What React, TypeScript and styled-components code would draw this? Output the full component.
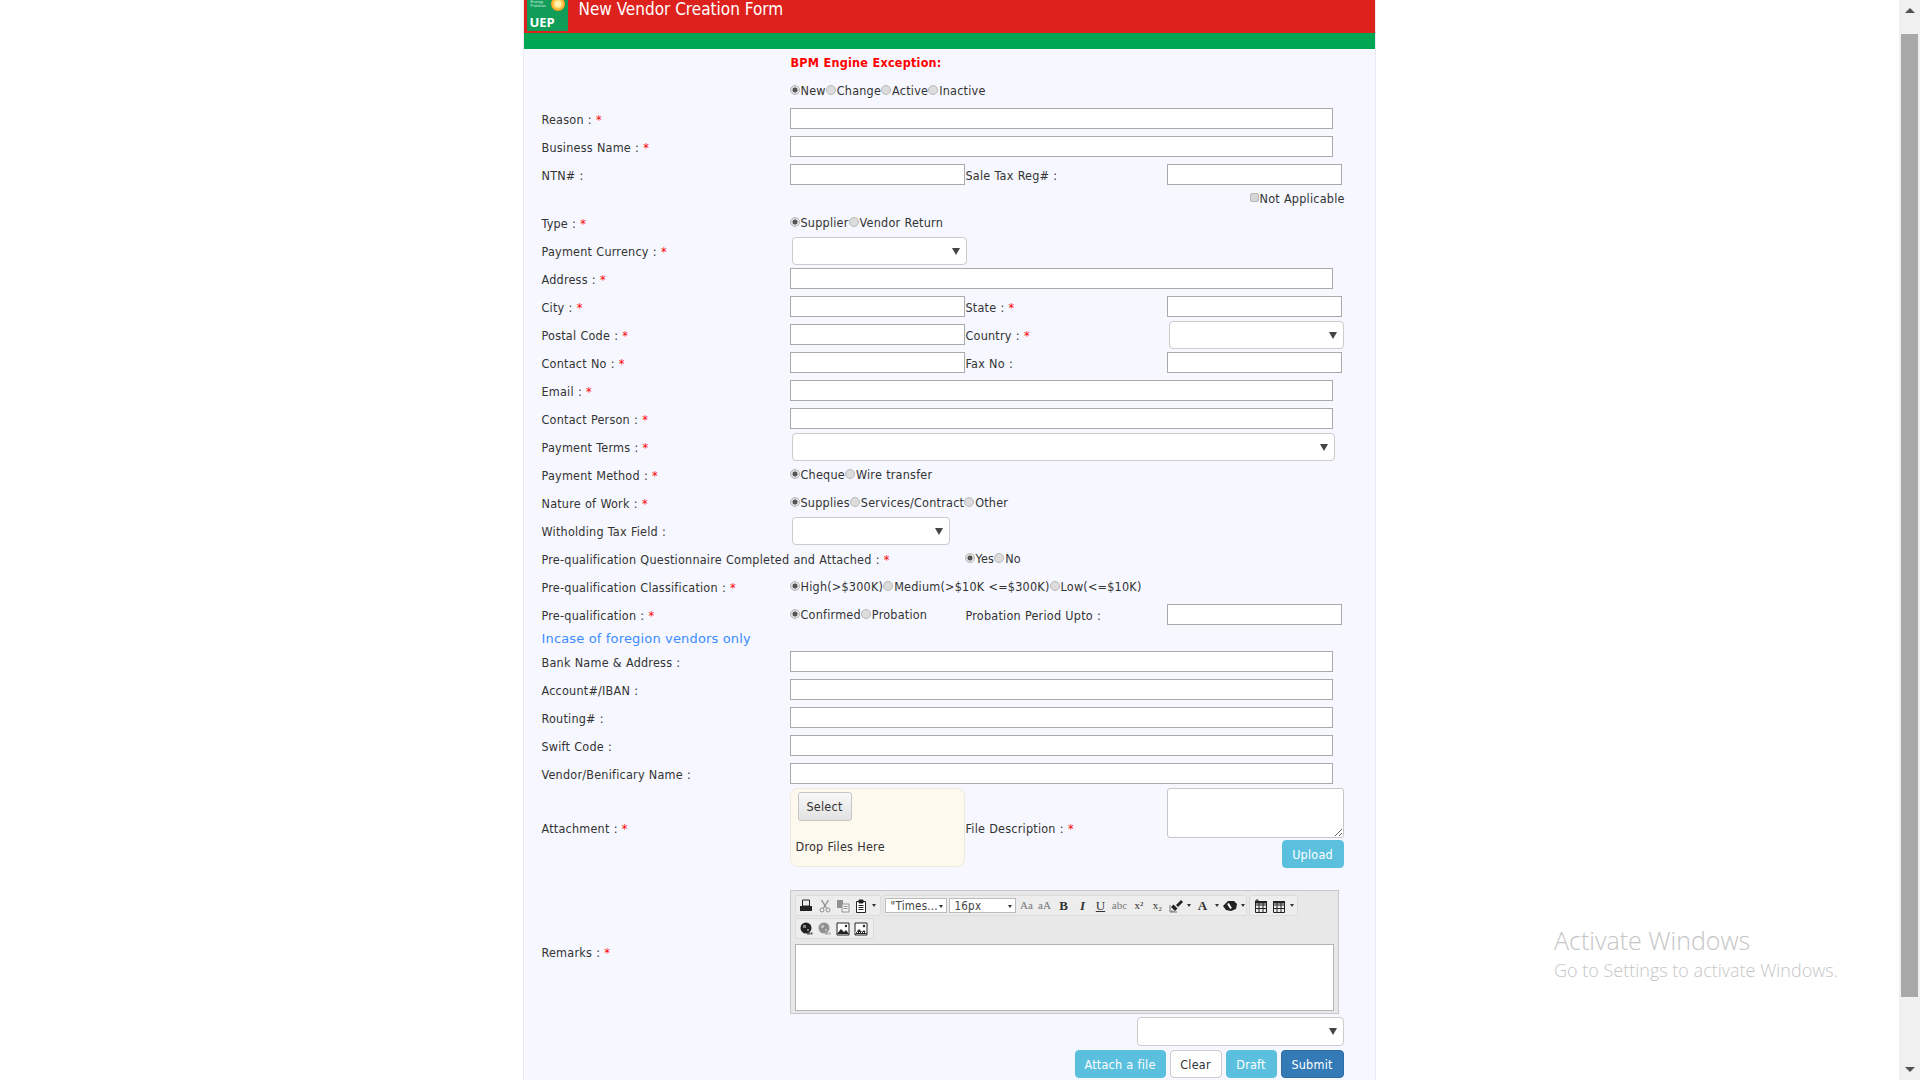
import React from "react";
import styled, { createGlobalStyle } from "styled-components";

const Global = createGlobalStyle`
  html, body { margin: 0; padding: 0; height: 100%; overflow: hidden; background: #fff; }
  #root { height: 100%; }
`;

const Shell = styled.div`
  position: relative;
  display: flex;
  height: 1080px;
  overflow: hidden;
  font-family: "DejaVu Sans", Verdana, sans-serif;
  font-stretch: condensed;
  font-size: 12.5px;
  letter-spacing: 0.22px;
  word-spacing: 0.3px;
  color: #333;
`;
const PageArea = styled.div`
  flex: 1;
  display: flex;
  justify-content: center;
`;
const Card = styled.div`
  width: 851px;
  height: 1080px;
  box-sizing: content-box;
  border-left: 1px solid #e9e9f0;
  border-right: 1px solid #e9e9f0;
  margin-left: -1px;
  background: #f6f7ff;
  overflow: hidden;
`;
const RedBar = styled.div`
  height: 33px;
  background: #dd211c;
  display: flex;
  overflow: hidden;
  padding-left: 3px;
`;
const LogoBox = styled.div`
  width: 41px;
  height: 31px;
  flex: none;
  background: #0f9d58;
  position: relative;
  overflow: hidden;
  color: #fff;
`;
const LogoSmall = styled.span`
  position: absolute;
  left: 4px;
  top: 0;
  font: 4px/4px "Liberation Sans", sans-serif;
  letter-spacing: 0;
  color: #d8f0e0;
`;
const LogoSun = styled.span`
  position: absolute;
  left: 24px;
  top: -3px;
  width: 14px;
  height: 14px;
  border-radius: 50%;
  background: radial-gradient(circle, #fff3b0 0 25%, #fdb92c 55%, #e2502a 100%);
`;
const LogoName = styled.span`
  position: absolute;
  left: 3px;
  top: 15px;
  font: bold 13px/14px "Open Sans", sans-serif;
  letter-spacing: 0;
`;
const Title = styled.div`
  margin: 1px 0 0 11px;
  color: #fff;
  font-size: 17px;
  letter-spacing: 0;
  word-spacing: 0;
  line-height: 17px;
`;
const GreenBar = styled.div`
  height: 16px;
  background: #00a651;
`;
const Form = styled.div`
  padding-left: 18px;
`;
const LabelText = styled.div<{ $span?: number }>`
  ${(p) => (p.$span ? `grid-column: span ${p.$span};` : "")}
  padding-top: 1px;
`;
const Row = styled.div<{ $h?: number }>`
  display: grid;
  grid-template-columns: 248px 175px 202px 175px;
  height: ${(p) => p.$h ?? 28}px;
  line-height: ${(p) => p.$h ?? 28}px;
  white-space: nowrap;
  & > ${LabelText}:nth-child(3) {
    padding-left: 1px;
  }
`;
const ExceptionText = styled.div`
  grid-column: 2 / 5;
  padding-left: 1px;
  color: #f00;
  font-weight: bold;
`;
const Star = styled.span`
  color: #f00;
`;
const TextInput = styled.input<{ $wide?: boolean }>`
  box-sizing: border-box;
  width: ${(p) => (p.$wide ? "543px" : "175px")};
  height: 21px;
  margin: 3px 0 0;
  padding: 0;
  background: #fff;
  border: 1px solid #aaa;
  border-radius: 0;
  ${(p) => (p.$wide ? "grid-column: span 3;" : "")}
`;
const SelectBox = styled.div<{ $w: number; $span?: number }>`
  box-sizing: border-box;
  position: relative;
  width: ${(p) => p.$w}px;
  height: 28px;
  margin-left: 2px;
  background: #fff;
  border: 1px solid #ccc;
  border-radius: 4px;
  ${(p) => (p.$span ? `grid-column: span ${p.$span};` : "")}
  &::after {
    content: "";
    position: absolute;
    right: 6px;
    top: 10px;
    border-left: 4px solid transparent;
    border-right: 4px solid transparent;
    border-top: 7px solid #444;
  }
`;
const RadioGroup = styled.div<{ $span?: number }>`
  ${(p) => (p.$span ? `grid-column: span ${p.$span};` : "")}
  display: flex;
  align-items: center;
  height: 27px;
`;
const Radio = styled.input.attrs({ type: "radio", readOnly: true })`
  appearance: none;
  box-sizing: border-box;
  flex: none;
  width: 10px;
  height: 10px;
  margin: 0 1px 1px 0;
  border-radius: 50%;
  background: #dcdcdc;
  border: 1px solid #b9b9b9;
  &:checked {
    background: radial-gradient(circle, #555 0 2.2px, #dcdcdc 2.8px);
  }
`;
const CheckLine = styled.div`
  grid-column: 4;
  display: flex;
  align-items: center;
  margin-left: 83px;
  height: 19px;
  line-height: 19px;
`;
const Check = styled.input.attrs({ type: "checkbox", readOnly: true })`
  appearance: none;
  box-sizing: border-box;
  flex: none;
  width: 9px;
  height: 9px;
  margin: 0 1px 2px 0;
  background: #d6d6d6;
  border: 1px solid #b5b5b5;
  border-radius: 2px;
`;
const SectionNote = styled.div`
  grid-column: 1 / 5;
  color: #3c8dff;
  font-size: 13px;
  font-stretch: normal;
  line-height: 19px;
  letter-spacing: 0.16px;
  word-spacing: 0;
`;
const AttachRow = styled.div`
  display: grid;
  grid-template-columns: 248px 175px 202px 177px;
  align-items: center;
  height: 82px;
  white-space: nowrap;
  & > ${LabelText} {
    padding-top: 0;
    margin-bottom: 2px;
  }
  & > ${LabelText}:nth-child(3) {
    padding-left: 1px;
  }
`;
const DropZone = styled.div`
  box-sizing: border-box;
  width: 175px;
  height: 79px;
  margin-bottom: 3px;
  padding: 3px 5px 0;
  background: #fef9ee;
  border: 1px solid #efe9dc;
  border-radius: 8px;
`;
const SelectFile = styled.button`
  display: block;
  box-sizing: border-box;
  width: 54px;
  height: 29px;
  margin-left: 2px;
  padding: 0;
  font: inherit;
  letter-spacing: inherit;
  color: #333;
  background: linear-gradient(#f8f8f8, #e2e2e2);
  border: 1px solid #c6c6c6;
  border-radius: 3px;
`;
const DropText = styled.div`
  margin-top: 18px;
  line-height: 15px;
`;
const DescColumn = styled.div`
  display: flex;
  flex-direction: column;
  align-items: flex-end;
  gap: 2px;
  padding-bottom: 2px;
`;
const DescArea = styled.textarea`
  box-sizing: border-box;
  display: block;
  width: 177px;
  height: 50px;
  margin: 0;
  background: #fff;
  border: 1px solid #c6c6c6;
  border-radius: 3px;
`;
const ActionButton = styled.button<{ $kind: "info" | "primary" | "plain"; $w: number }>`
  box-sizing: border-box;
  width: ${(p) => p.$w}px;
  height: 28px;
  padding: 0;
  font: inherit;
  letter-spacing: inherit;
  word-spacing: inherit;
  border-radius: 4px;
  border: 1px solid
    ${(p) => (p.$kind === "info" ? "#5bc0de" : p.$kind === "primary" ? "#2e6da4" : "#ccc")};
  background: ${(p) => (p.$kind === "info" ? "#5bc0de" : p.$kind === "primary" ? "#337ab7" : "#fff")};
  color: ${(p) => (p.$kind === "plain" ? "#333" : "#fff")};
`;
const RemarksRow = styled.div`
  display: grid;
  grid-template-columns: 248px 549px;
  align-items: center;
  margin-top: 20px;
`;
const Editor = styled.div`
  box-sizing: border-box;
  width: 549px;
  height: 124px;
  padding: 4px 4px 2px 4px;
  background: #e8e8e8;
  border: 1px solid #c8c8c8;
  display: flex;
  flex-direction: column;
`;
const ToolRow = styled.div`
  display: flex;
  gap: 2px;
  height: 21px;
  margin-bottom: 2px;
`;
const ToolGroup = styled.div<{ $w: number; $pad?: number }>`
  box-sizing: border-box;
  width: ${(p) => p.$w}px;
  padding-left: ${(p) => p.$pad ?? 2}px;
  display: flex;
  align-items: center;
  background: #ededed;
  border: 1px solid #dcdcdc;
  border-radius: 2px;
`;
const Tool = styled.span<{ $w?: number; $dim?: boolean }>`
  flex: none;
  width: ${(p) => p.$w ?? 18}px;
  height: 19px;
  display: flex;
  align-items: center;
  justify-content: center;
  font: 11px "Liberation Serif", serif;
  letter-spacing: 0;
  color: ${(p) => (p.$dim ? "#777" : "#333")};
  line-height: 1;
`;
const ToolCaret = styled.span`
  flex: none;
  width: 8px;
  display: flex;
  justify-content: center;
  &::after {
    content: "";
    border-left: 2.5px solid transparent;
    border-right: 2.5px solid transparent;
    border-top: 3px solid #333;
  }
`;
const Combo = styled.div<{ $w: number }>`
  box-sizing: border-box;
  flex: none;
  width: ${(p) => p.$w}px;
  height: 15px;
  margin-right: 2px;
  padding: 1px 3px 0 5px;
  display: flex;
  align-items: center;
  justify-content: space-between;
  background: #fff;
  border: 1px solid #bbb;
  font-size: 11.5px;
  line-height: 13px;
  color: #444;
`;
const ComboCaret = styled.span`
  border-left: 2.5px solid transparent;
  border-right: 2.5px solid transparent;
  border-top: 3px solid #333;
`;
const EditArea = styled.div`
  box-sizing: border-box;
  width: 539px;
  height: 67px;
  margin-top: 3px;
  background: #fff;
  border: 1px solid #b4b4b4;
`;
const BelowEditor = styled.div`
  display: flex;
  justify-content: flex-end;
  width: 802px;
  margin-top: 3px;
`;
const BelowSelect = styled(SelectBox)`
  height: 29px;
  margin-left: 0;
`;
const ButtonBar = styled.div`
  display: flex;
  justify-content: flex-end;
  gap: 4px;
  width: 802px;
  margin-top: 4px;
`;
const ScrollTrack = styled.div`
  width: 21px;
  flex: none;
  background: #f0f0f0;
  display: flex;
  flex-direction: column;
  align-items: center;
`;
const ScrollArrow = styled.div<{ $up?: boolean }>`
  flex: none;
  height: 34px;
  width: 100%;
  display: flex;
  align-items: ${(p) => (p.$up ? "flex-start" : "flex-end")};
  justify-content: center;
  padding: 8px 0;
  box-sizing: border-box;
  &::after {
    content: "";
    border-left: 5px solid transparent;
    border-right: 5px solid transparent;
    ${(p) => (p.$up ? "border-bottom: 5px solid #505050;" : "border-top: 5px solid #505050;")}
  }
`;
const ScrollThumb = styled.div`
  width: 17px;
  height: 963px;
  flex: none;
  background: #a8a8a8;
`;
const ScrollRest = styled.div`
  flex: 1;
`;
const Watermark = styled.div`
  position: absolute;
  left: 1554px;
  top: 924px;
  color: #c6c6c6;
  font-family: "Open Sans", sans-serif;
  font-stretch: normal;
  font-weight: 300;
  letter-spacing: 0;
  word-spacing: 0;
`;
const WatermarkTitle = styled.div`
  font-size: 25px;
  line-height: 32px;
`;
const WatermarkSub = styled.div`
  font-size: 18px;
  line-height: 24px;
  margin-top: 2px;
`;

const Label = ({ text, req, span }: { text: string; req?: boolean; span?: number }) => (
  <LabelText $span={span}>
    {text} :{req && <> <Star>*</Star></>}
  </LabelText>
);

const Radios = ({ items, span }: { items: string[]; span?: number }) => (
  <RadioGroup $span={span}>
    {items.map((t, i) => (
      <React.Fragment key={t}>
        <Radio checked={i === 0} />
        {t}
      </React.Fragment>
    ))}
  </RadioGroup>
);

const Ico = ({ children, dim }: { children: React.ReactNode; dim?: boolean }) => (
  <svg width="14" height="14" viewBox="0 0 14 14" fill="#222" opacity={dim ? 0.45 : 1}>
    {children}
  </svg>
);

const TableIcon = ({ plus }: { plus?: boolean }) => (
  <Ico>
    <path d="M1.5 2.5h11v11h-11zM1.5 6h11M1.5 9.5h11M5 2.5v11M9 2.5v11" fill="none" stroke="#222" />
    <path d="M1 2h12v2.5H1z" />
    {plus && <path d="M3 0v4M1 2h4" stroke="#222" />}
  </Ico>
);

const ImageIcon = ({ dots }: { dots?: boolean }) => (
  <Ico>
    <path d="M1 1h12v12H1z" fill="#fff" stroke="#222" />
    <path d="M1 12l4-5 3 3 2-2 3 4z" />
    <circle cx="10" cy="4" r="1.2" />
    {dots && <path d="M1 10.5h12" stroke="#fff" strokeDasharray="1 1" />}
  </Ico>
);

const LinkIcon = ({ dim }: { dim?: boolean }) => (
  <Ico dim={dim}>
    <circle cx="6" cy="6" r="5.5" />
    <path d="M3 3h3v3H3zM7 7h2v2H7z" fill="#fff" opacity="0.45" />
    <path d="M7 11.5h3M10.5 11.5h2" stroke="#555" strokeWidth="2" fill="none" />
  </Ico>
);

const Toolbar = () => (
  <>
    <ToolRow>
      <ToolGroup $w={86} $pad={0}>
        <Tool $w={20}>
          <Ico>
            <path d="M3.5 1h7v6h-7z" fill="none" stroke="#222" />
            <path d="M1 7h12v5H1z" />
          </Ico>
        </Tool>
        <Tool>
          <Ico dim>
            <path d="M3.5 1l5 8M10.5 1l-5 8" fill="none" stroke="#222" strokeWidth="1.4" />
            <circle cx="4" cy="11" r="2" fill="none" stroke="#222" />
            <circle cx="10" cy="11" r="2" fill="none" stroke="#222" />
          </Ico>
        </Tool>
        <Tool>
          <Ico dim>
            <path d="M1 1h6v8H1z" />
            <path d="M6 5h7v8H6z" fill="#fff" stroke="#222" />
            <path d="M7.5 7.5h4M7.5 9.5h4" stroke="#222" />
          </Ico>
        </Tool>
        <Tool>
          <Ico>
            <path d="M2.5 2.5h9v11h-9z" fill="#fff" stroke="#222" />
            <path d="M5 1h4v3H5zM4.5 6.5h5M4.5 8.5h5M4.5 10.5h5" stroke="#222" />
          </Ico>
        </Tool>
        <ToolCaret />
      </ToolGroup>
      <ToolGroup $w={364} $pad={1}>
        <Combo $w={62}>
          "Times...
          <ComboCaret />
        </Combo>
        <Combo $w={67}>
          16px
          <ComboCaret />
        </Combo>
        <Tool $dim>Aa</Tool>
        <Tool $dim>aA</Tool>
        <Tool $w={20}><b style={{ fontSize: 13 }}>B</b></Tool>
        <Tool><b><i style={{ fontSize: 13 }}>I</i></b></Tool>
        <Tool style={{ textDecoration: "underline", fontSize: 13 }}>U</Tool>
        <Tool $w={20} $dim>abc</Tool>
        <Tool $w={19}>x²</Tool>
        <Tool>x₂</Tool>
        <Tool>
          <Ico>
            <path d="M7 6l5-5 2 2-5 5zM4.5 5.5l4 4-2.5 2.5-4-4z" />
            <path d="M1 6v7h7M3 13v-2M5 13v-1" fill="none" stroke="#777" />
          </Ico>
        </Tool>
        <ToolCaret />
        <Tool $w={20}><b style={{ fontSize: 13 }}>A</b></Tool>
        <ToolCaret />
        <Tool>
          <Ico>
            <path d="M5 2h6l3 3-1 5-5 2-5-1-3-4z" />
            <path d="M5 4.5l3 5" stroke="#fff" strokeWidth="2" />
          </Ico>
        </Tool>
        <ToolCaret />
      </ToolGroup>
      <ToolGroup $w={49} $pad={2}>
        <Tool><TableIcon plus /></Tool>
        <Tool><TableIcon /></Tool>
        <ToolCaret />
      </ToolGroup>
    </ToolRow>
    <ToolRow>
      <ToolGroup $w={79} $pad={2}>
        <Tool><LinkIcon /></Tool>
        <Tool><LinkIcon dim /></Tool>
        <Tool><ImageIcon /></Tool>
        <Tool><ImageIcon dots /></Tool>
      </ToolGroup>
    </ToolRow>
  </>
);

export default function App() {
  return (
    <Shell>
      <Global />
      <PageArea>
        <Card>
          <RedBar>
            <LogoBox>
              <LogoSmall>Energy<br />Pakistan</LogoSmall>
              <LogoSun />
              <LogoName>UEP</LogoName>
            </LogoBox>
            <Title>New Vendor Creation Form</Title>
          </RedBar>
          <GreenBar />
          <Form>
            <Row>
              <span />
              <ExceptionText>BPM Engine Exception:</ExceptionText>
            </Row>
            <Row>
              <span />
              <Radios items={["New", "Change", "Active", "Inactive"]} span={3} />
            </Row>
            <Row><Label text="Reason" req /><TextInput $wide /></Row>
            <Row><Label text="Business Name" req /><TextInput $wide /></Row>
            <Row>
              <Label text="NTN#" />
              <TextInput />
              <Label text="Sale Tax Reg#" />
              <TextInput />
            </Row>
            <Row $h={20}>
              <span /><span /><span />
              <CheckLine><Check />Not Applicable</CheckLine>
            </Row>
            <Row>
              <Label text="Type" req />
              <Radios items={["Supplier", "Vendor Return"]} span={3} />
            </Row>
            <Row><Label text="Payment Currency" req /><SelectBox $w={175} /></Row>
            <Row><Label text="Address" req /><TextInput $wide /></Row>
            <Row>
              <Label text="City" req />
              <TextInput />
              <Label text="State" req />
              <TextInput />
            </Row>
            <Row>
              <Label text="Postal Code" req />
              <TextInput />
              <Label text="Country" req />
              <SelectBox $w={175} />
            </Row>
            <Row>
              <Label text="Contact No" req />
              <TextInput />
              <Label text="Fax No" />
              <TextInput />
            </Row>
            <Row><Label text="Email" req /><TextInput $wide /></Row>
            <Row><Label text="Contact Person" req /><TextInput $wide /></Row>
            <Row><Label text="Payment Terms" req /><SelectBox $w={543} $span={3} /></Row>
            <Row>
              <Label text="Payment Method" req />
              <Radios items={["Cheque", "Wire transfer"]} span={3} />
            </Row>
            <Row>
              <Label text="Nature of Work" req />
              <Radios items={["Supplies", "Services/Contract", "Other"]} span={3} />
            </Row>
            <Row><Label text="Witholding Tax Field" /><SelectBox $w={158} /></Row>
            <Row>
              <Label text="Pre-qualification Questionnaire Completed and Attached" req span={2} />
              <Radios items={["Yes", "No"]} span={2} />
            </Row>
            <Row>
              <Label text="Pre-qualification Classification" req />
              <Radios items={["High(>$300K)", "Medium(>$10K <=$300K)", "Low(<=$10K)"]} span={3} />
            </Row>
            <Row>
              <Label text="Pre-qualification" req />
              <Radios items={["Confirmed", "Probation"]} />
              <Label text="Probation Period Upto" />
              <TextInput />
            </Row>
            <Row $h={19}>
              <SectionNote>Incase of foregion vendors only</SectionNote>
            </Row>
            <Row><Label text="Bank Name & Address" /><TextInput $wide /></Row>
            <Row><Label text="Account#/IBAN" /><TextInput $wide /></Row>
            <Row><Label text="Routing#" /><TextInput $wide /></Row>
            <Row><Label text="Swift Code" /><TextInput $wide /></Row>
            <Row><Label text="Vendor/Benificary Name" /><TextInput $wide /></Row>
            <AttachRow>
              <Label text="Attachment" req />
              <DropZone>
                <SelectFile>Select</SelectFile>
                <DropText>Drop Files Here</DropText>
              </DropZone>
              <Label text="File Description" req />
              <DescColumn>
                <DescArea />
                <ActionButton $kind="info" $w={62}>Upload</ActionButton>
              </DescColumn>
            </AttachRow>
            <RemarksRow>
              <Label text="Remarks" req />
              <Editor>
                <Toolbar />
                <EditArea />
              </Editor>
            </RemarksRow>
            <BelowEditor><BelowSelect $w={207} /></BelowEditor>
            <ButtonBar>
              <ActionButton $kind="info" $w={91}>Attach a file</ActionButton>
              <ActionButton $kind="plain" $w={52}>Clear</ActionButton>
              <ActionButton $kind="info" $w={51}>Draft</ActionButton>
              <ActionButton $kind="primary" $w={63}>Submit</ActionButton>
            </ButtonBar>
          </Form>
        </Card>
      </PageArea>
      <ScrollTrack>
        <ScrollArrow $up />
        <ScrollThumb />
        <ScrollRest />
        <ScrollArrow />
      </ScrollTrack>
      <Watermark>
        <WatermarkTitle>Activate Windows</WatermarkTitle>
        <WatermarkSub>Go to Settings to activate Windows.</WatermarkSub>
      </Watermark>
    </Shell>
  );
}
